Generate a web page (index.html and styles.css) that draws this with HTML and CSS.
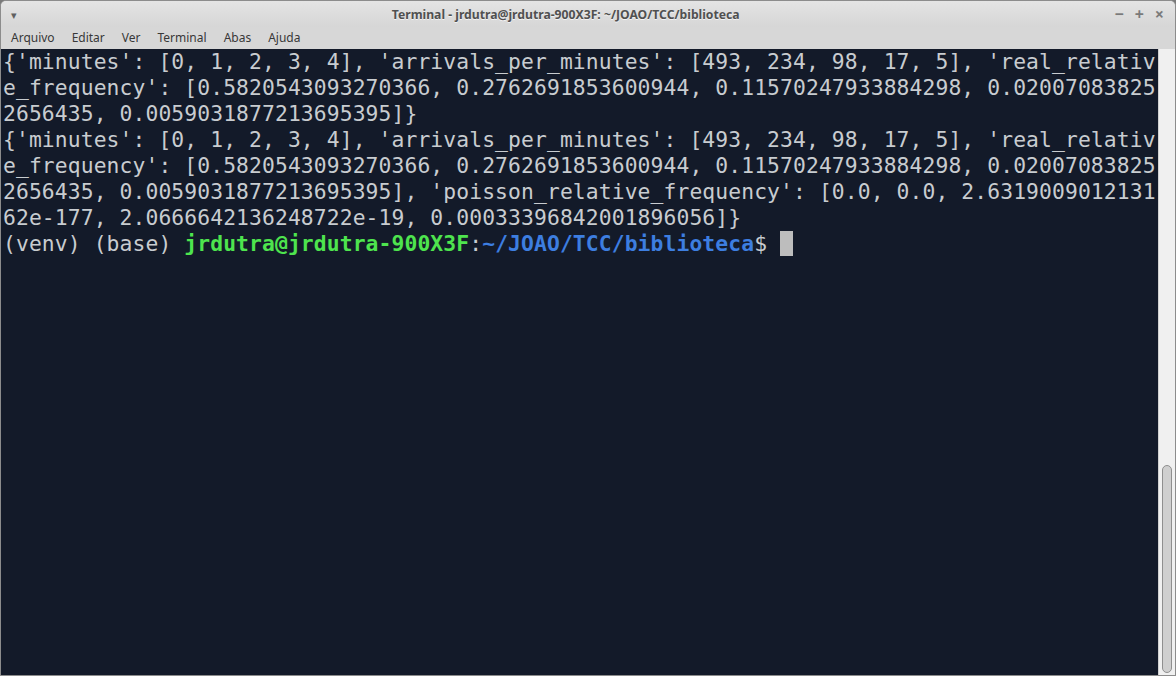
FILE: index.html
```html
<!DOCTYPE html>
<html lang="pt">
<head>
    <meta charset="UTF-8">
    <title>Terminal - jrdutra@jrdutra-900X3F: ~/JOAO/TCC/biblioteca</title>
    <link rel="stylesheet" href="styles.css">
</head>
<body>
    <div id="window">
        <div id="titlebar">
            <span class="win-menu">&#9662;</span>
            <span class="title">Terminal - jrdutra@jrdutra-900X3F: ~/JOAO/TCC/biblioteca</span>
            <div class="win-buttons">
                <span>&minus;</span>
                <span>+</span>
                <span>&times;</span>
            </div>
        </div>
        <ul id="menubar">
            <li>Arquivo</li>
            <li>Editar</li>
            <li>Ver</li>
            <li>Terminal</li>
            <li>Abas</li>
            <li>Ajuda</li>
        </ul>
        <div id="body">
            <pre id="screen">{'minutes': [0, 1, 2, 3, 4], 'arrivals_per_minutes': [493, 234, 98, 17, 5], 'real_relativ
e_frequency': [0.5820543093270366, 0.2762691853600944, 0.11570247933884298, 0.02007083825
2656435, 0.0059031877213695395]}
{'minutes': [0, 1, 2, 3, 4], 'arrivals_per_minutes': [493, 234, 98, 17, 5], 'real_relativ
e_frequency': [0.5820543093270366, 0.2762691853600944, 0.11570247933884298, 0.02007083825
2656435, 0.0059031877213695395], 'poisson_relative_frequency': [0.0, 0.0, 2.6319009012131
62e-177, 2.0666642136248722e-19, 0.00033396842001896056]}
(venv) (base) <b class="user">jrdutra@jrdutra-900X3F</b>:<b class="path">~/JOAO/TCC/biblioteca</b>$ <span class="cursor"> </span></pre>
            <div id="scrollbar">
                <div class="thumb"></div>
            </div>
        </div>
    </div>
</body>
</html>
```
FILE: styles.css
```css
html, body {
    margin: 0;
    padding: 0;
    height: 100%;
    background-color: #7a7a7a;
}

#window {
    height: 676px;
    display: flex;
    flex-direction: column;
    background: #dadada;
    border: 1px solid #8c8c8c;
    border-radius: 6px 6px 0 0;
    box-sizing: border-box;
    overflow: hidden;
    font-family: "Noto Sans", "Open Sans", sans-serif;
}

#titlebar {
    height: 26px;
    display: flex;
    align-items: center;
    background: linear-gradient(#e4e4e4, #d6d6d6);
    color: #4a4a4a;
}

.win-menu {
    font-size: 11px;
    color: #606060;
    margin-left: 10px;
}

.title {
    flex: 1;
    text-align: center;
    font-size: 12.2px;
    font-weight: bold;
    color: #505050;
    text-shadow: 0 1px 0 #f2f2f2;
}

.win-buttons {
    display: flex;
    gap: 11px;
    margin-right: 11px;
    font-size: 16px;
    font-weight: bold;
    color: #7a7a7a;
}

#menubar {
    list-style: none;
    margin: 0;
    padding: 0 0 2px 10px;
    height: 20px;
    display: flex;
    align-items: center;
    background: #d7d7d7;
    font-size: 12px;
    color: #383838;
}

#menubar li {
    margin-right: 17px;
}

#body {
    flex: 1;
    display: flex;
    background: #131a29;
}

#screen {
    flex: 1;
    margin: 0;
    padding: 0 0 0 2px;
    font-family: "DejaVu Sans Mono", monospace;
    font-size: 21.33px;
    letter-spacing: 0.11px;
    line-height: 26px;
    color: #c8ccd0;
    overflow: hidden;
}

.user {
    color: #4ee44e;
}

.path {
    color: #3d7ee0;
}

.cursor {
    background: #bdbdbd;
}

#scrollbar {
    width: 10px;
    background: #f0f0f0;
    border-left: 1px solid #d0d0d0;
    display: flex;
    flex-direction: column;
    justify-content: flex-end;
    padding: 0 3px 2px 3px;
}

.thumb {
    height: 206px;
    background: #cfcfcf;
    border: 1px solid #8f8f8f;
    border-radius: 5px;
}
```
